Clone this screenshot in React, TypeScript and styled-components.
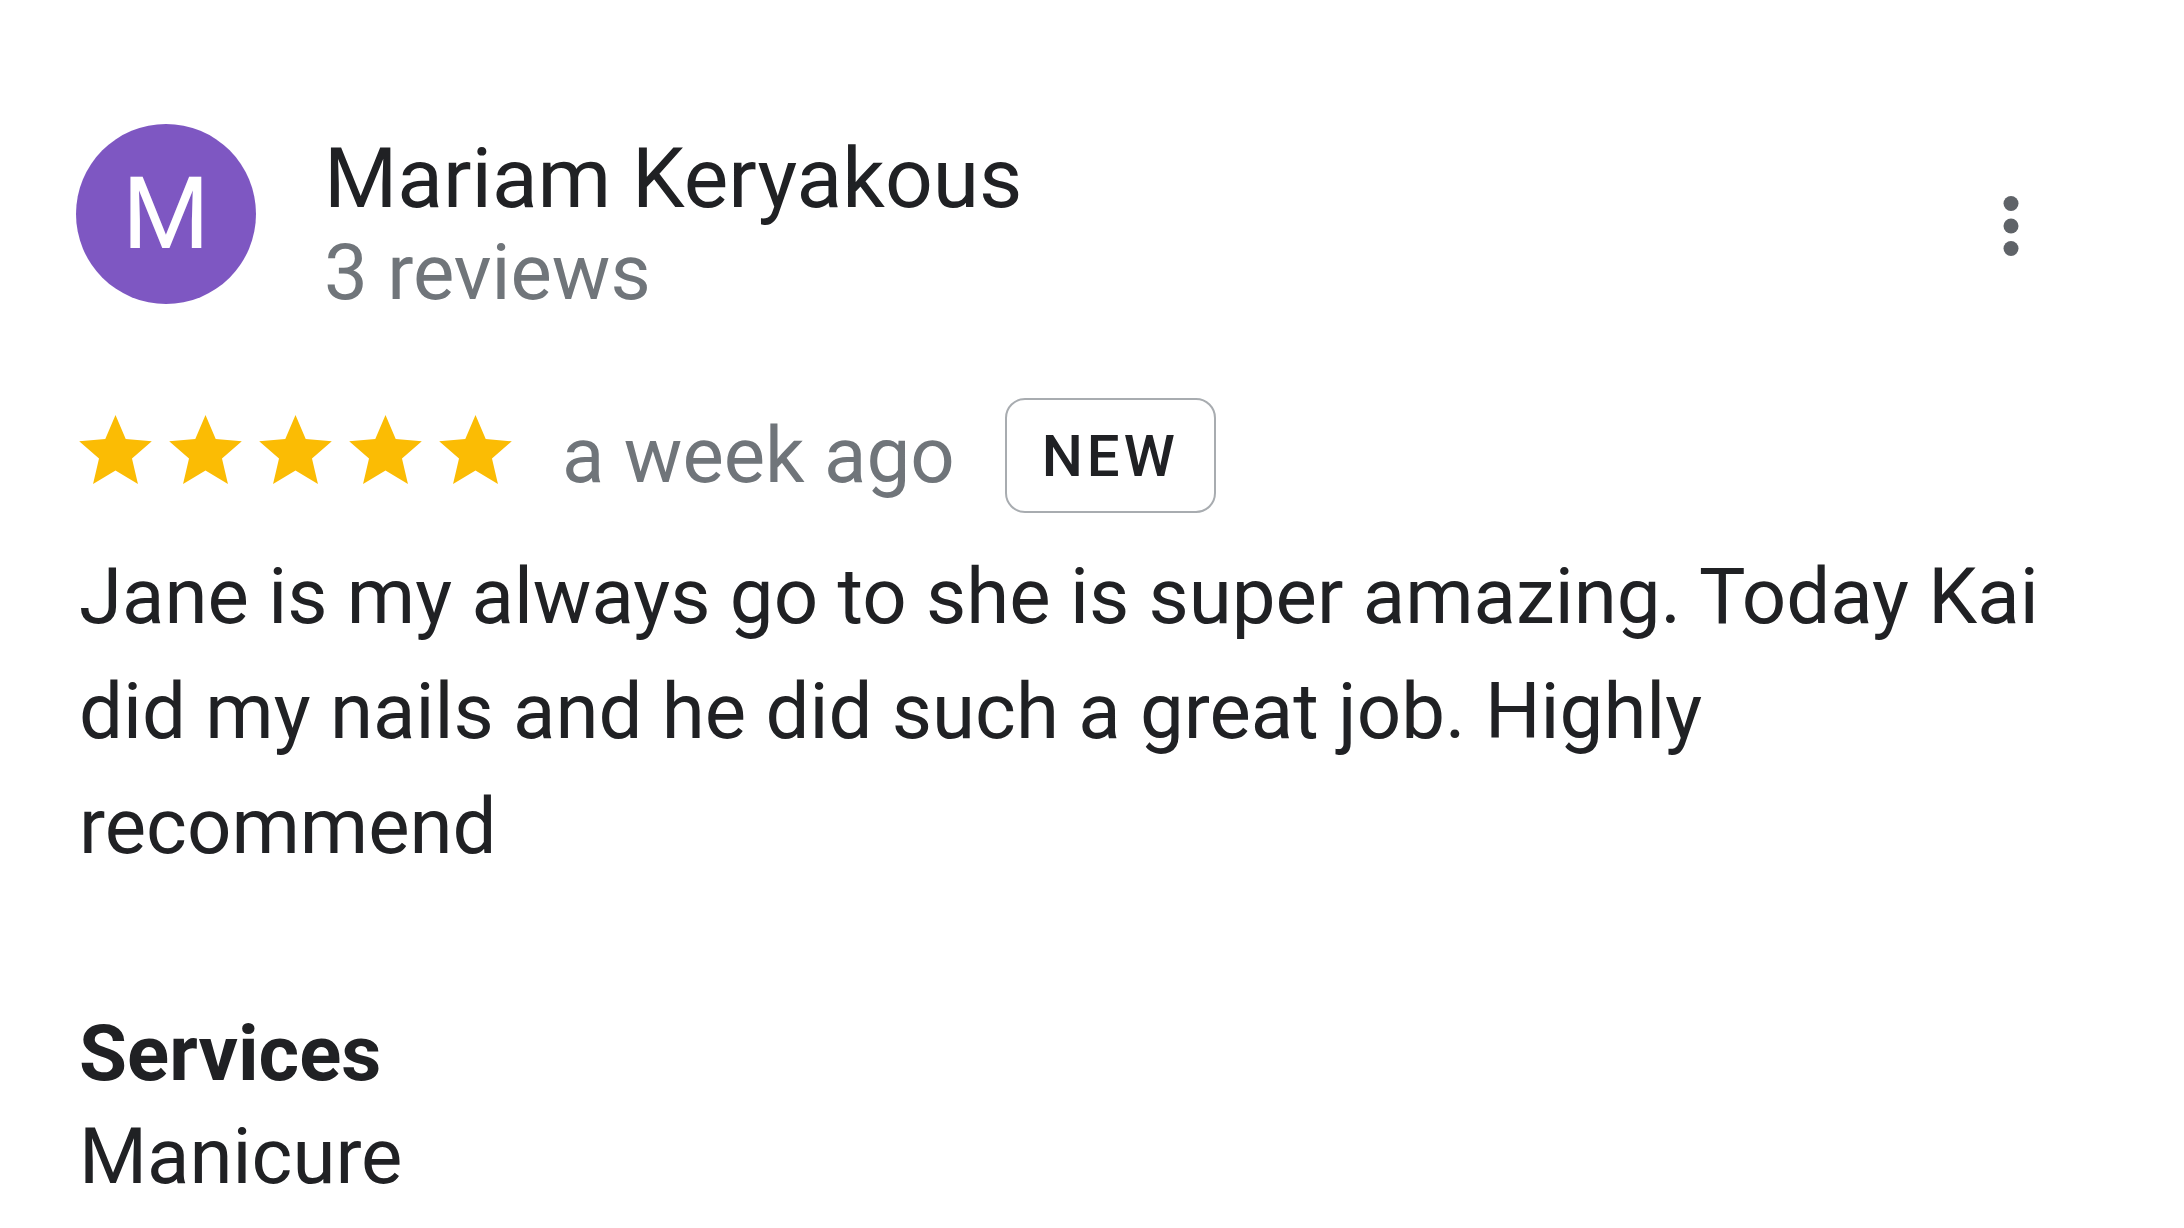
import React, { FC } from 'react'
import styled, { createGlobalStyle } from 'styled-components'

const GlobalStyle = createGlobalStyle`
  html, body {
    margin: 0;
    padding: 0;
    background: #ffffff;
  }
  body {
    font-family: Roboto, "Noto Sans", "Liberation Sans", sans-serif;
    color: #202124;
  }
`

const Card = styled.article`
  width: 2010px;
  padding: 124px 0 0 76px;
`

const Header = styled.header`
  display: flex;
  align-items: flex-start;
`

const Avatar = styled.div`
  width: 180px;
  height: 180px;
  border-radius: 50%;
  background: #7e57c2;
  color: #ffffff;
  display: flex;
  align-items: center;
  justify-content: center;
  font-size: 100px;
  line-height: 1;
  flex-shrink: 0;
`

const Author = styled.div`
  display: flex;
  flex-direction: column;
  margin-left: 68px;
  padding-top: 5px;
`

const Name = styled.div`
  font-size: 84px;
  line-height: 100px;
  color: #202124;
`

const Meta = styled.div`
  font-size: 78px;
  line-height: 88px;
  color: #70757a;
`

const MoreButton = styled.button`
  margin: 72px 67px 0 auto;
  padding: 0;
  border: 0;
  background: none;
  display: flex;
  color: #5f6368;
`

const Content = styled.div`
  padding-left: 3px;
`

const RatingRow = styled.div`
  display: flex;
  align-items: center;
  margin-top: 81px;
  height: 115px;
`

const Stars = styled.div`
  display: flex;
  gap: 17px;
  padding-bottom: 13px;
`

const When = styled.span`
  font-size: 78px;
  line-height: 90px;
  color: #70757a;
  margin-left: 50px;
`

const Badge = styled.span`
  margin-left: 50px;
  width: 211px;
  height: 115px;
  box-sizing: border-box;
  border: 2px solid #a8acb0;
  border-radius: 20px;
  display: flex;
  align-items: center;
  justify-content: center;
  font-size: 58px;
  font-weight: 500;
  letter-spacing: 4px;
  color: #202124;
`

const Body = styled.p`
  margin: 26px 0 0;
  font-size: 78px;
  line-height: 115px;
  color: #202124;
`

const Section = styled.div`
  margin-top: 120px;
`

const SectionTitle = styled.div`
  font-size: 78px;
  line-height: 100px;
  font-weight: 700;
  color: #202124;
`

const SectionValue = styled.div`
  font-size: 78px;
  line-height: 106px;
  color: #202124;
`

const Star: FC = () => (
  <svg width="73" height="69" viewBox="2 2 20 19" fill="#fbbc04">
    <path d="M12 17.27L18.18 21l-1.64-7.03L22 9.24l-7.19-.61L12 2 9.19 8.63 2 9.24l5.46 4.73L5.82 21z" />
  </svg>
)

const MoreIcon: FC = () => (
  <svg width="16" height="60" viewBox="0 0 16 60" fill="currentColor">
    <circle cx="8" cy="7.5" r="7.5" />
    <circle cx="8" cy="30" r="7.5" />
    <circle cx="8" cy="52.5" r="7.5" />
  </svg>
)

const App: FC = () => {
  return (
    <>
      <GlobalStyle />
      <Card>
        <Header>
          <Avatar>M</Avatar>
          <Author>
            <Name>Mariam Keryakous</Name>
            <Meta>3 reviews</Meta>
          </Author>
          <MoreButton aria-label="More options">
            <MoreIcon />
          </MoreButton>
        </Header>
        <Content>
          <RatingRow>
            <Stars>
              {[0, 1, 2, 3, 4].map(i => <Star key={i} />)}
            </Stars>
            <When>a week ago</When>
            <Badge>NEW</Badge>
          </RatingRow>
          <Body>
            Jane is my always go to she is super amazing. Today Kai did my nails and he did such a great job. Highly recommend
          </Body>
          <Section>
            <SectionTitle>Services</SectionTitle>
            <SectionValue>Manicure</SectionValue>
          </Section>
        </Content>
      </Card>
    </>
  )
}

export default App
